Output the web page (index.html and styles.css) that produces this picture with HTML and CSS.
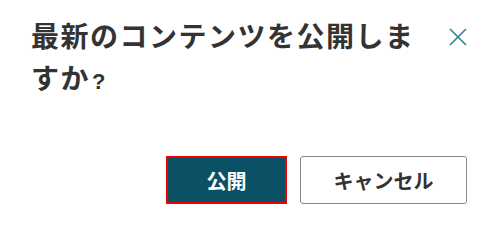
FILE: index.html
```html
<!DOCTYPE html>
<html lang="ja">
<head>
<meta charset="utf-8">
<link rel="stylesheet" href="styles.css">
</head>
<body>
<div class="dialog">
  <div class="header">
    <h1 class="title">最新のコンテンツを公開しますか<span class="q">?</span></h1>
    <button class="close" aria-label="閉じる">
      <svg width="18" height="18" viewBox="0 0 18 18"><path d="M1 1L17 17M17 1L1 17" stroke="#2b8095" stroke-width="1.6" fill="none"/></svg>
    </button>
  </div>
  <div class="actions">
    <button class="btn primary">公開</button>
    <button class="btn secondary">キャンセル</button>
  </div>
</div>
</body>
</html>
```
FILE: styles.css
```css
html, body { margin: 0; padding: 0; background: #fff; }
body { font-family: "Noto Sans CJK JP", "Noto Sans", sans-serif; color: #333; }
.dialog { width: 500px; height: 225px; box-sizing: border-box; padding: 14px 33px 0 31px; }
.header { display: flex; justify-content: space-between; align-items: flex-start; }
.title { margin: 0; font-size: 28px; font-weight: 700; line-height: 42px; height: 84px; width: 395px; letter-spacing: 1.5px; color: #333; }
.q { font-family: "Liberation Sans", sans-serif; font-size: 22px; line-height: 0; letter-spacing: 0; margin-left: 2px; }
.close { border: 0; background: none; padding: 0; margin-top: 14px; width: 18px; height: 18px; cursor: pointer; }
.close svg { display: block; }
.actions { display: flex; justify-content: flex-end; gap: 13px; margin-top: 58px; }
.btn { font-family: inherit; font-size: 20px; font-weight: 700; height: 48px; box-sizing: border-box; border-radius: 3px; cursor: pointer; padding: 0; }
.primary { width: 121px; background: #0b5166; color: #fff; border: 2px solid #e00; border-radius: 0; }
.secondary { width: 167px; background: #fff; color: #333; border: 1px solid #8a8a8a; }
```
